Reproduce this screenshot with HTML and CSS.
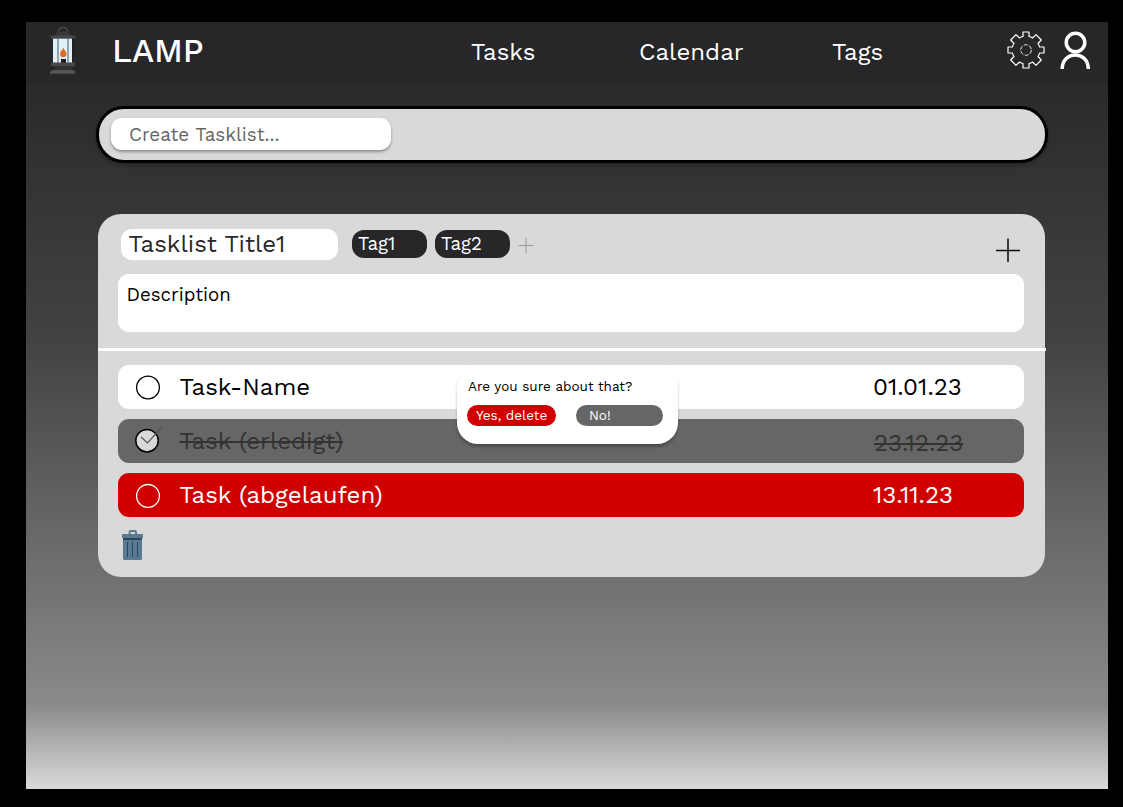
FILE: index.html
```html
<!DOCTYPE html>
<html lang="en">
<head>
<meta charset="utf-8">
<title>LAMP</title>
<link rel="stylesheet" href="styles.css">
</head>
<body>
<div class="app">
  <header class="header">
    <svg class="lantern" width="28" height="50" viewBox="0 0 28 50">
      <path d="M9 7.500C10 .8 18 .8 19 7.500" fill="none" stroke="#555" stroke-width="1.200"/>
      <path d="M5.500 11L9.500 6.500h9.500l4 4.500z" fill="#383838"/>
      <path d="M4 13h19v25H4z" fill="#dff0fb"/>
      <path d="M1.500 10.500h25v3.200h-25z" fill="#464646"/>
      <path d="M23 13.500h1.500V38H23z" fill="#1f1f1f"/>
      <path d="M8.500 13.500h1V38h-1zM18.500 13.500h1V38h-1z" fill="#555"/>
      <path d="M14.300 22.500c.7 2.500 3.300 4 3.300 6.500 0 4.300-6.600 4.300-6.600 0 0-2.500 2.600-4 3.300-6.500z" fill="#dc6e22"/>
      <path d="M12 34h5v4h-5z" fill="#1c1c1c"/>
      <path d="M2 37.500h24v3L24 41.500H4l-2-1z" fill="#484848"/>
      <path d="M6 41.500h17V45H6z" fill="#303030"/>
      <path d="M4 45h20l2 1.500v2.300H1v-2.300z" fill="#555"/>
    </svg>
    <h1 class="brand">LAMP</h1>
    <nav class="nav">
      <a class="nav-tasks">Tasks</a>
      <a class="nav-calendar">Calendar</a>
      <a class="nav-tags">Tags</a>
    </nav>
    <div class="account">
      <svg width="38" height="38" viewBox="0 0 38 38" fill="none" stroke="#fff" stroke-width="1.200" stroke-linejoin="round">
        <path d="M16 1h6v4.500q2 .3 3.500 1.500L29 3.600 34.300 9 31 12.500q1.200 1.500 1.500 3.500H37v6h-4.500q-.3 2-1.500 3.500l3.300 3.500L29 34.400 25.500 31q-1.500 1.200-3.500 1.500V37h-6v-4.500q-2-.3-3.500-1.500L9 34.400 3.700 29 7 25.500Q5.800 24 5.500 22H1v-6h4.500q.3-2 1.500-3.500L3.700 9 9 3.600 12.500 7Q14 5.800 16 5.500z"/>
        <circle cx="19" cy="19" r="5.300" stroke-width=".9" stroke-dasharray="4 1.500"/>
      </svg>
      <svg width="31" height="38" viewBox="0 0 31 38" fill="none" stroke="#fff" stroke-width="3.500">
        <circle cx="15.500" cy="11.500" r="9.300"/>
        <path d="M2.200 38C2.200 19.300 28.300 19.300 28.300 38"/>
      </svg>
    </div>
  </header>

  <main class="main">
    <section class="create-bar"><div class="create-input">Create Tasklist...</div></section>

    <section class="card">
      <div class="card-head">
        <div class="title">Tasklist Title1</div>
        <span class="tag">Tag1</span>
        <span class="tag">Tag2</span>
        <svg class="add-tag" width="16" height="16" viewBox="0 0 16 16" stroke="#999"><path d="M.500 8.500h15M8 1v15"/></svg>
        <svg class="add-task" width="24" height="24" viewBox="0 0 24 24" stroke="#111" stroke-width="1.600"><path d="M0 12.500h24M12 0.500v24"/></svg>
      </div>
      <div class="description">Description</div>
      <div class="divider"></div>
      <div class="tasks">
        <div class="task">
          <svg class="check" width="26" height="26" viewBox="0 0 26 26" fill="none" stroke="#000" stroke-width="1.300"><circle cx="13" cy="13.500" r="11.400"/></svg>
          <span class="name">Task-Name</span><span class="date">01.01.23</span>
        </div>
        <div class="task done">
          <svg class="check" width="26" height="26" viewBox="0 0 26 26" fill="none"><circle cx="12" cy="12.700" r="11.200" fill="#d9d9d9" stroke="#000" stroke-width="1.500"/><path d="M6 9l6.500 6L26.500-.5" stroke="#555" stroke-width="1.200"/></svg>
          <span class="name">Task (erledigt)</span><span class="date">23.12.23</span>
        </div>
        <div class="task expired">
          <svg class="check" width="26" height="26" viewBox="0 0 26 26" fill="none" stroke="#fff" stroke-width="1.300"><circle cx="13" cy="13.900" r="11.400"/></svg>
          <span class="name">Task (abgelaufen)</span><span class="date">13.11.23</span>
        </div>
        <div class="dialog">
          <p class="question">Are you sure about that?</p>
          <div class="actions"><span class="btn yes">Yes, delete</span><span class="btn no">No!</span></div>
        </div>
      </div>
      <svg class="trash" width="22" height="30" viewBox="0 0 22 30">
        <path d="M7.500 5V2.200q0-1.200 1.200-1.200h4.100Q14 1 14 2.200V5" fill="none" stroke="#587b93" stroke-width="2"/>
        <path d="M0 4h21v4H0z" fill="#587b93"/>
        <path d="M1 8h19v20.500q0 1.500-1.500 1.500h-16Q1 30 1 28.500z" fill="#587b93"/>
        <path d="M1 8h19v2H1z" fill="#2f4454"/>
        <path d="M5.500 12v15M10.500 12v15M15.500 12v15" stroke="#2f4454"/>
      </svg>
    </section>
  </main>
</div>
</body>
</html>
```
FILE: styles.css
```css
* { box-sizing: border-box; }
body {
  margin: 0;
  height: 807px;
  padding: 22px 15px 18px 26px;
  background: #000;
  font-family: "Work Sans", "Open Sans", sans-serif;
  overflow: hidden;
}
.app {
  height: 767px;
  background: linear-gradient(#272727 0%, #2b2b2b 9%, #434345 42%, #707070 72%, #8a8a8a 89%, #dadada 100%);
}
.header {
  display: flex;
  height: 61px;
  background: #272729;
  color: #fff;
}
.lantern { margin: 3px 0 0 23px; flex: none; }
.brand {
  flex: none;
  margin: 0 0 0 35px;
  width: 359px;
  font-size: 33.200px;
  font-weight: 500;
  line-height: 57px;
}
.nav { display: flex; flex: none; font-size: 24px; line-height: 61px; }
.nav-tasks { width: 168px; }
.nav-calendar { width: 193px; }
.nav-tags { width: 175px; }
.account { display: flex; flex: none; gap: 15px; padding-top: 9px; }
.main { padding: 23px 60px 0 70px; }
.create-bar {
  height: 57px;
  padding: 9px 12px;
  border: 3px solid #000;
  border-radius: 28px;
  background: #d9d9d9;
  box-shadow: 0 2px 4px rgba(0, 0, 0, .3);
}
.create-input {
  width: 280px;
  height: 32px;
  padding-left: 18px;
  border-radius: 11px;
  background: #fff;
  box-shadow: 0 2px 3px rgba(0, 0, 0, .35);
  color: #666;
  font-size: 18.850px;
  line-height: 33px;
}
.card {
  width: 947px;
  height: 362.500px;
  margin: 51px 0 0 2px;
  border-radius: 23px;
  background: #d9d9d9;
}
.card-head { display: flex; height: 60px; padding: 15px 0 0 23px; }
.title {
  width: 217px;
  height: 31px;
  margin-right: 14px;
  padding-left: 7.500px;
  border-radius: 11px;
  background: #fff;
  color: #272729;
  font-size: 24px;
  line-height: 30px;
}
.tag {
  width: 75px;
  height: 28px;
  margin: 1px 8px 0 0;
  padding-left: 6px;
  border-radius: 12px;
  background: #272729;
  color: #fff;
  font-size: 18.700px;
  line-height: 29px;
}
.add-tag { margin-top: 8px; }
.add-task { margin: 9px 0 0 462px; }
.description {
  width: 906px;
  height: 58px;
  margin-left: 20px;
  padding-left: 8.500px;
  border-radius: 11px;
  background: #fff;
  font-size: 18.700px;
  line-height: 43px;
}
.divider { width: 948px; height: 3px; margin-top: 16px; background: #fff; }
.tasks {
  position: relative;
  display: grid;
  gap: 10.500px;
  width: 906px;
  margin: 14px 0 0 20px;
}
.task {
  display: flex;
  align-items: center;
  height: 43.600px;
  padding-left: 17px;
  border-radius: 11px;
  background: #fff;
  font-size: 24px;
  line-height: 43px;
}
.check { overflow: visible; flex: none; }
.name { flex: none; width: 712px; padding: 2px 0 0 18.500px; }
.date { padding-top: 2px; }
.done { background: #666; color: #333; }
.done .name, .done .date { text-decoration: line-through; text-decoration-thickness: 1.500px; }
.done .date { padding: 5px 0 0 1px; }
.expired { background: #d10000; color: #fff; }
.dialog {
  position: absolute;
  left: 339px;
  top: 1px;
  width: 221px;
  height: 78px;
  padding: 11px 10px 0;
  border-radius: 21px;
  background: #fff;
  box-shadow: 0 3px 3px rgba(0, 0, 0, .25);
}
.question { margin: 0; padding-left: 1px; font-size: 13.500px; line-height: 18px; }
.actions { display: flex; gap: 20px; margin-top: 10px; }
.btn {
  width: 89px;
  height: 21px;
  padding-left: 9px;
  border-radius: 11px;
  color: #fff;
  font-size: 13.500px;
  line-height: 20px;
}
.yes { background: #d10000; }
.no { width: 87px; padding-left: 13px; background: #666; }
.trash { display: block; margin: 13px 0 0 24px; }
```
